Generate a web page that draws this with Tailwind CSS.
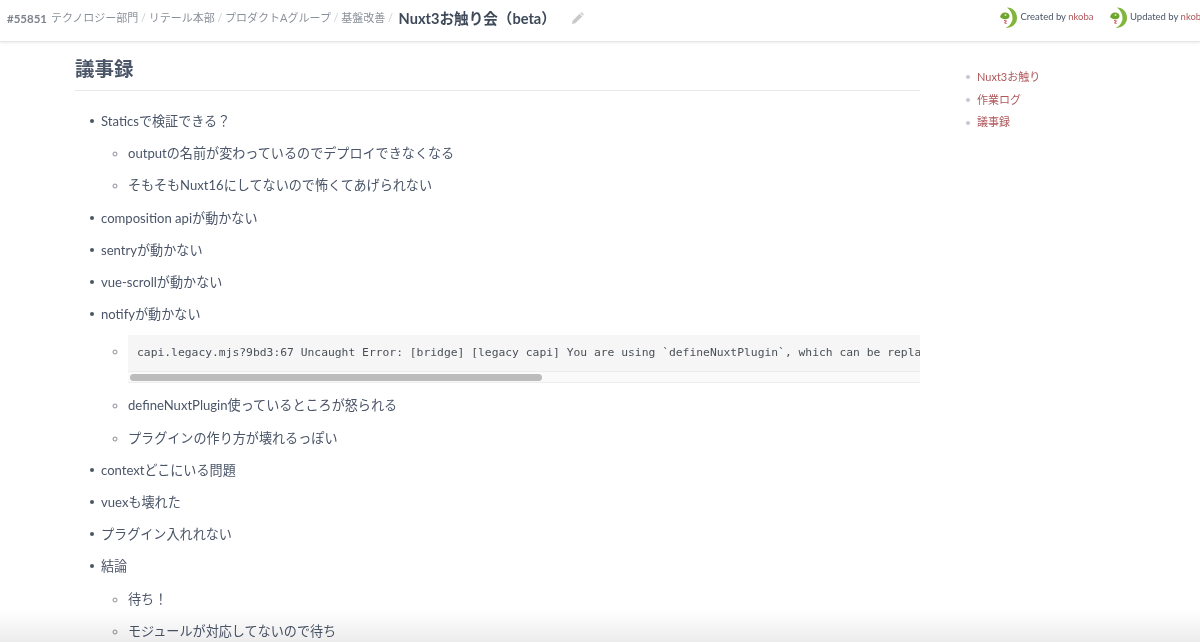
<!DOCTYPE html>
<html lang="ja">
  <head>
    <meta charset="UTF-8" />
    <meta name="viewport" content="width=device-width, initial-scale=1.0" />
    <title>Nuxt3お触り会（beta）</title>
    <script src="https://cdn.jsdelivr.net/npm/@tailwindcss/browser@4"></script>
  </head>
  <body class="relative h-[642px] w-[1200px] overflow-hidden bg-white font-['Lato','Noto_Sans_CJK_JP',sans-serif] text-[#4a5568]">
    <!-- header -->
    <header class="flex h-[42px] items-center justify-between overflow-hidden border-b border-[#e6e6e6] pl-[7px] shadow-[0_1px_3px_rgba(0,0,0,0.08)]">
      <div class="mb-[4px] flex items-center whitespace-nowrap text-[11px]">
        <span class="text-[11.5px] font-bold text-[#7d838c]">#55851</span>
        <span class="ml-1 text-[#8b919a]">テクノロジー部門</span>
        <span class="mx-[2.7px] text-[#c9cdd2]">/</span>
        <span class="text-[#8b919a]">リテール本部</span>
        <span class="mx-[2.7px] text-[#c9cdd2]">/</span>
        <span class="text-[#8b919a]">プロダクトAグループ</span>
        <span class="mx-[2.7px] text-[#c9cdd2]">/</span>
        <span class="text-[#8b919a]">基盤改善</span>
        <span class="mx-[2.7px] text-[#c9cdd2]">/</span>
        <span class="ml-[3px] text-[14.6px] font-bold text-[#3d4858]">Nuxt3お触り会（beta）</span>
        <svg class="ml-[15px]" width="13" height="13" viewBox="0 0 14 14">
          <path d="M1 13l.8-3.6 7.4-7.4 2.8 2.800-7.400 7.400z" fill="#c9c9c9" />
          <path d="M9.900 1.300l.7-.7a1 1 0 0 1 1.400 0l1.400 1.400a1 1 0 0 1 0 1.400l-.7.7z" fill="#d4d4d4" />
        </svg>
      </div>
      <div class="mb-[7px] flex w-[201px] shrink-0 items-center gap-[15px] whitespace-nowrap text-[9.500px]">
        <span class="flex shrink-0 items-center gap-[3.5px]">
          <svg width="18" height="21" viewBox="0 0 18 21">
            <path d="M8 .5C14 .5 18 5 18 11c0 6-5 10-11.500 10 4-2 7-5.500 7-10 0-4-2-8-5.500-10.500z" fill="#82b53c" />
            <path d="M1 10c.5-2.500 2.500-4.500 5-4.500 2.500 0 4.500 1.500 4.500 3.500 0 2.500-2.500 3.500-5 3.200-1.800-.2-3.200-1-4.500-2.200z" fill="#6fa52f" />
            <circle cx="6.500" cy="8" r="1" fill="#d8e8b8" />
            <path d="M5 13.500l2.500.5-2 1.800 2 .7" fill="none" stroke="#d0453f" stroke-width="1" />
          </svg>
          <span>Created by <span class="text-[#b0575a]">nkoba</span></span>
        </span>
        <span class="flex shrink-0 items-center gap-[3.5px]">
          <svg width="18" height="21" viewBox="0 0 18 21">
            <path d="M8 .5C14 .5 18 5 18 11c0 6-5 10-11.500 10 4-2 7-5.500 7-10 0-4-2-8-5.500-10.500z" fill="#82b53c" />
            <path d="M1 10c.5-2.500 2.500-4.500 5-4.500 2.500 0 4.500 1.500 4.500 3.500 0 2.500-2.500 3.500-5 3.200-1.800-.2-3.200-1-4.500-2.200z" fill="#6fa52f" />
            <circle cx="6.500" cy="8" r="1" fill="#d8e8b8" />
            <path d="M5 13.500l2.500.5-2 1.800 2 .7" fill="none" stroke="#d0453f" stroke-width="1" />
          </svg>
          <span>Updated by <span class="text-[#b0575a]">nkoba</span></span>
        </span>
      </div>
    </header>

    <div class="flex pl-[75px]">
      <!-- article -->
      <main class="w-[845px] shrink-0">
        <h2 class="mt-[12px] border-b border-[#e8e8e8] pb-[7px] text-[19.500px] leading-[29px] font-bold text-[#4a5568]">議事録</h2>
        <ul class="mt-[14px] list-none pl-[26px] text-[13.100px] leading-[32.200px] [&>li]:relative [&>li]:before:absolute [&>li]:before:top-[14px] [&>li]:before:left-[-11px] [&>li]:before:size-[4px] [&>li]:before:rounded-full [&>li]:before:bg-[#4a5568] [&>li]:before:content-['']">
          <li>Staticsで検証できる？
            <ul class="list-[circle] pl-[27px] marker:text-[#8a8f98]">
              <li>outputの名前が変わっているのでデプロイできなくなる</li>
              <li>そもそもNuxt16にしてないので怖くてあげられない</li>
            </ul>
          </li>
          <li>composition apiが動かない</li>
          <li>sentryが動かない</li>
          <li>vue-scrollが動かない</li>
          <li>notifyが動かない
            <ul class="list-[circle] pl-[27px] marker:text-[#8a8f98]">
              <li class="pt-[2px] pb-[6px] leading-[38px]">
                <div class="h-[48px] w-[792px] overflow-hidden bg-[#f6f6f6]">
                  <pre class="h-[36px] overflow-hidden pl-[9px] font-['DejaVu_Sans_Mono',monospace] text-[11.330px] leading-[34px] text-[#4a5058]">capi.legacy.mjs?9bd3:67 Uncaught Error: [bridge] [legacy capi] You are using `defineNuxtPlugin`, which can be replaced</pre>
                  <div class="flex h-[12px] items-center border-y border-[#ececec] bg-[#fafafa] pl-[2px]">
                    <div class="h-[7px] w-[412px] rounded-full bg-[#bcbcbc]"></div>
                  </div>
                </div>
              </li>
              <li>defineNuxtPlugin使っているところが怒られる</li>
              <li>プラグインの作り方が壊れるっぽい</li>
            </ul>
          </li>
          <li>contextどこにいる問題</li>
          <li>vuexも壊れた</li>
          <li>プラグイン入れれない</li>
          <li>結論
            <ul class="list-[circle] pl-[27px] marker:text-[#8a8f98]">
              <li>待ち！</li>
              <li>モジュールが対応してないので待ち</li>
            </ul>
          </li>
        </ul>
      </main>

      <!-- toc -->
      <nav class="ml-[46px] pt-[24px]">
        <ul class="text-[11px] leading-[22.700px] text-[#b0575a]">
          <li class="flex items-center gap-[7px]"><span class="size-[4px] rounded-full bg-[#c5c9d0]"></span>Nuxt3お触り</li>
          <li class="flex items-center gap-[7px]"><span class="size-[4px] rounded-full bg-[#c5c9d0]"></span>作業ログ</li>
          <li class="flex items-center gap-[7px]"><span class="size-[4px] rounded-full bg-[#c5c9d0]"></span>議事録</li>
        </ul>
      </nav>
    </div>

    <!-- fade at the bottom of the window -->
    <div class="pointer-events-none absolute inset-x-0 bottom-0 h-[32px] bg-linear-to-b from-white to-[#ececec] mix-blend-multiply"></div>
  </body>
</html>
